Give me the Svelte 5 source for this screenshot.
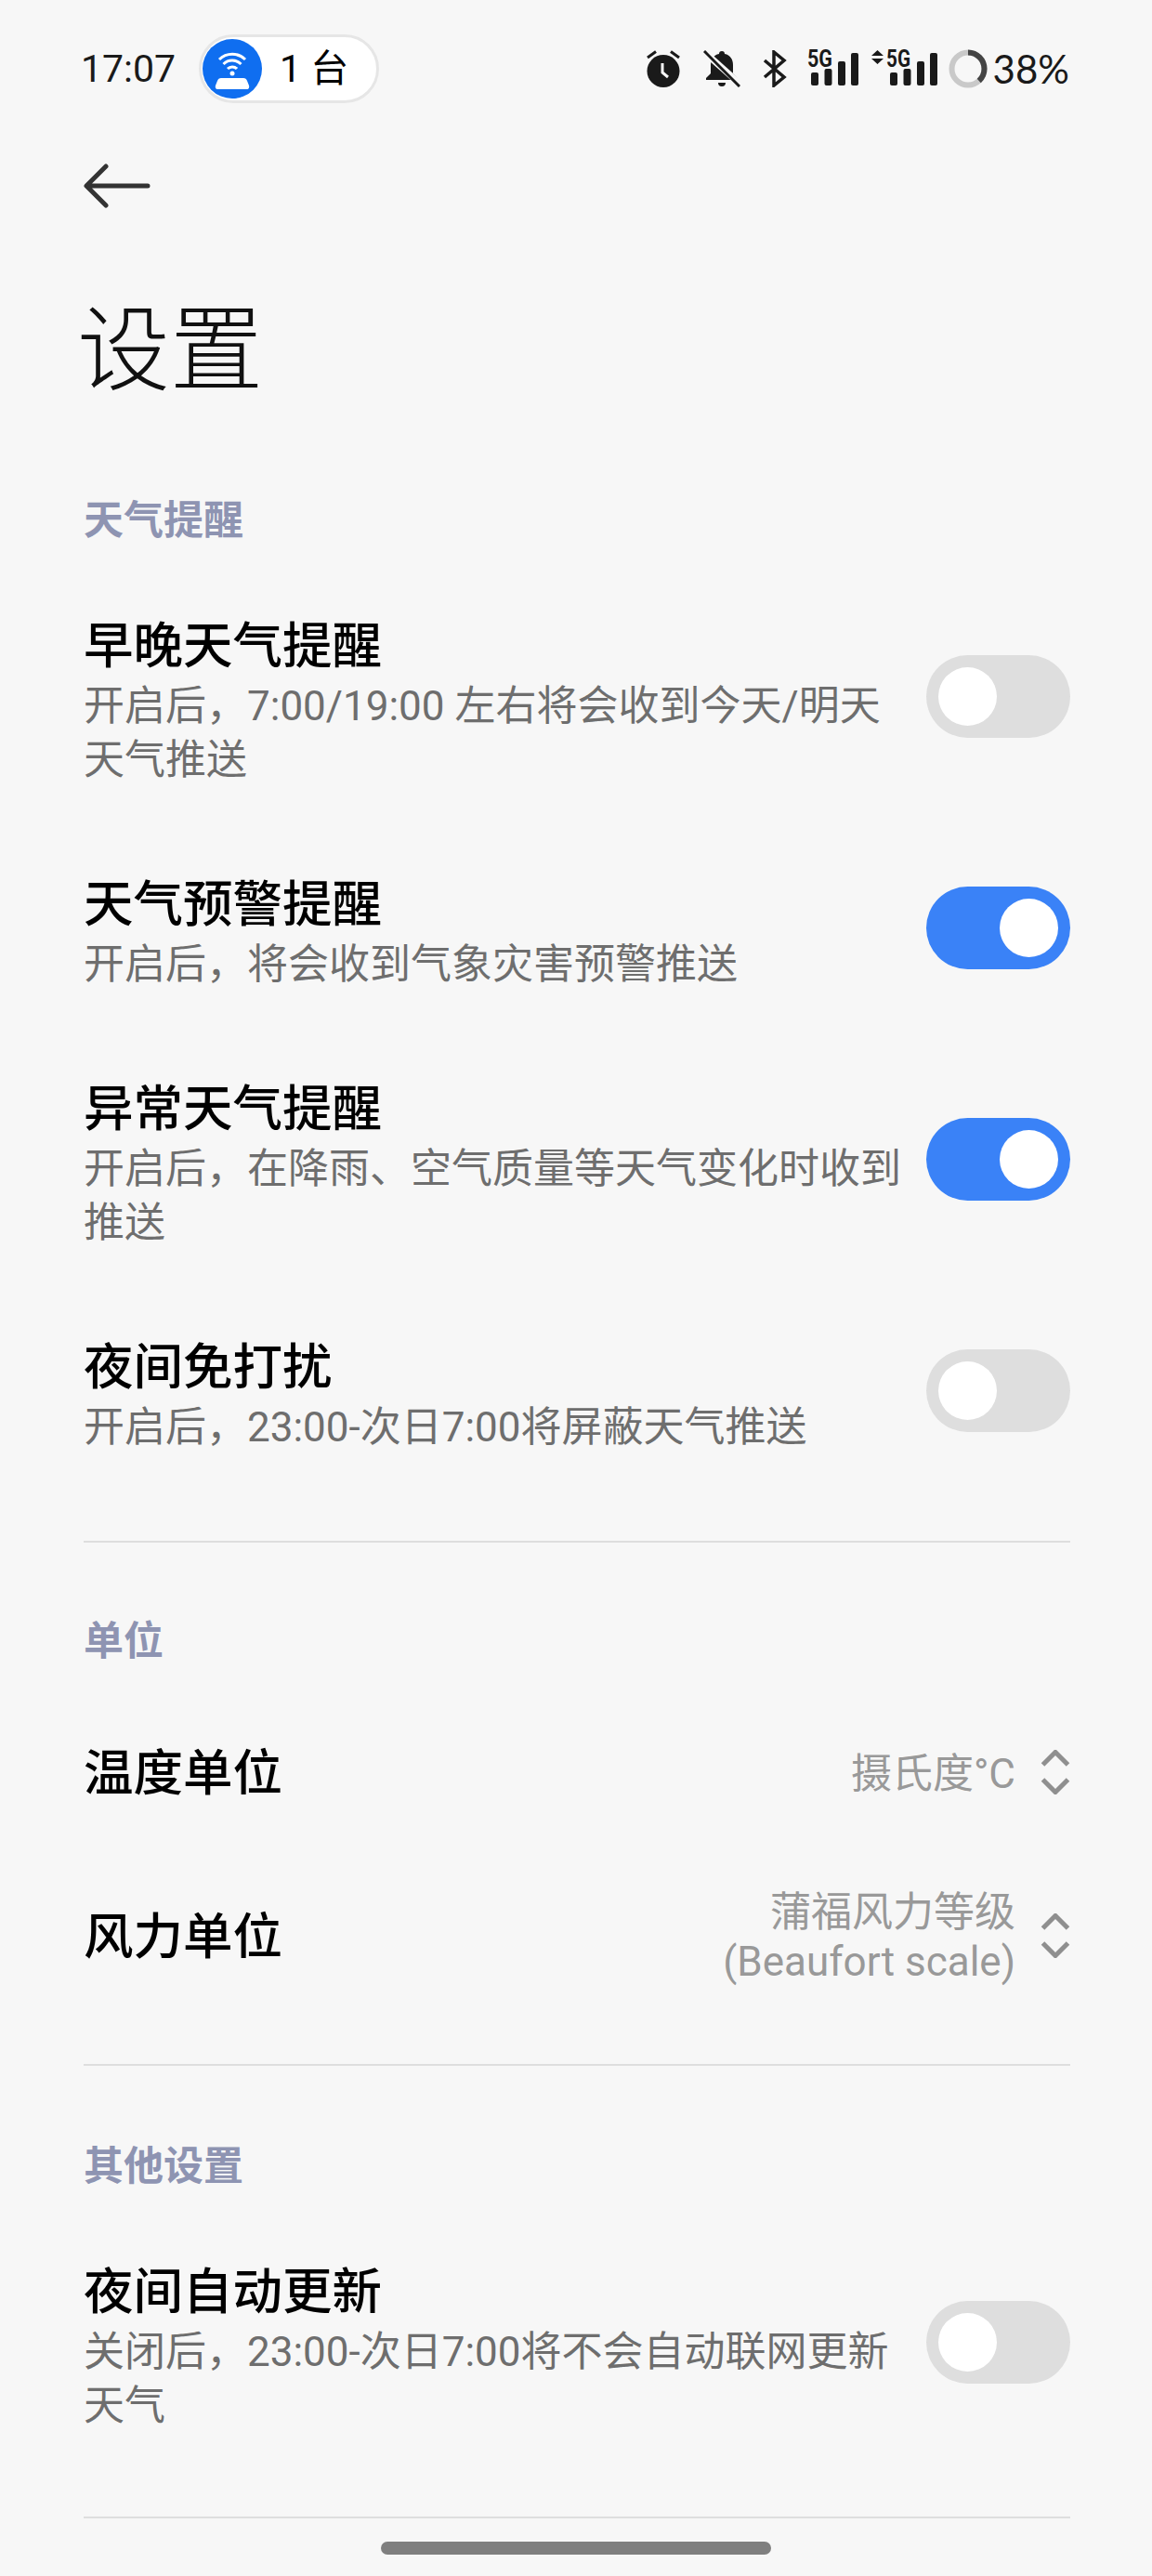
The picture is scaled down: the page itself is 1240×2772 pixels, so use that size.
<script>
  const group1 = [
    { title: '早晚天气提醒', desc: '开启后，7:00/19:00 左右将会收到今天/明天天气推送', on: false },
    { title: '天气预警提醒', desc: '开启后，将会收到气象灾害预警推送', on: true },
    { title: '异常天气提醒', desc: '开启后，在降雨、空气质量等天气变化时收到推送', on: true },
    { title: '夜间免打扰', desc: '开启后，23:00-次日7:00将屏蔽天气推送', on: false }
  ];
</script>

{#snippet toggle(on)}
  <div class="toggle" class:on><div class="knob"></div></div>
{/snippet}

{#snippet item(it)}
  <div class="item">
    <div class="text">
      <div class="title">{it.title}</div>
      <div class="desc">{it.desc}</div>
    </div>
    {@render toggle(it.on)}
  </div>
{/snippet}

{#snippet chev()}
  <svg class="chev" width="32" height="48" viewBox="0 0 32 48">
    <path d="M2.500 16 16 2.500 29.500 16M2.500 32 16 45.500 29.500 32" fill="none" stroke="#8f8f8f" stroke-width="5" />
  </svg>
{/snippet}

{#snippet bars(x)}
  <rect x={x} y="29" width="8" height="14" rx="2" />
  <rect x={x + 14.500} y="25" width="8" height="18" rx="2" />
  <rect x={x + 29} y="17" width="8" height="26" rx="2" />
  <rect x={x + 43} y="8" width="8" height="35" rx="2" />
{/snippet}

<div class="page">
  <div class="status">
    <div class="left">
      <span class="time">17:07</span>
      <div class="pill">
        <div class="dot">
          <svg width="64" height="64" viewBox="0 0 64 64">
            <path d="M18 22a20 20 0 0 1 28 0M22.500 27a13.500 13.500 0 0 1 19 0M27 32a7 7 0 0 1 10 0" fill="none" stroke="#fff" stroke-width="3" />
            <circle cx="32" cy="37" r="2.500" fill="#fff" />
            <path d="M20 42h24q3 0 4 3l2 5q1 4-3 4H17q-4 0-3-4l2-5q1-3 4-3z" fill="#fff" />
          </svg>
        </div>
        <span class="count">1 台</span>
      </div>
    </div>
    <div class="right">
      <svg width="38" height="40" viewBox="0 0 38 40">
        <circle cx="19" cy="22.500" r="17.500" fill="#1a1a1a" />
        <path d="M2 8 11 1.500M36 8 27 1.500" stroke="#1a1a1a" stroke-width="3" />
        <path d="M18 14v10l6 5" fill="none" stroke="#f7f7f7" stroke-width="3" />
      </svg>
      <svg class="bell" width="40" height="40" viewBox="0 0 40 40">
        <path d="M20 1a3 3 0 0 1 3 3c6 1 9 6 9 12v9l5 5v2H3v-2l5-5v-9c0-6 3-11 9-12a3 3 0 0 1 3-3zM16 35h8a4 4 0 0 1-8 0z" fill="#1a1a1a" />
        <path d="M-2 3 36 37" stroke="#f7f7f7" stroke-width="7" transform="translate(2 -2)" />
        <path d="M1 1 39 39" stroke="#1a1a1a" stroke-width="3" />
      </svg>
      <svg class="bt" width="26" height="40" viewBox="0 0 26 40">
        <path d="M2 11 23 29 12 38V2L23 11 2 29" fill="none" stroke="#1a1a1a" stroke-width="3.500" />
      </svg>
      <svg class="sig" width="55" height="50" viewBox="0 0 55 50" fill="#1a1a1a">
        <text x="0" y="23" class="fg" textLength="27" lengthAdjust="spacingAndGlyphs">5G</text>
        {@render bars(4)}
      </svg>
      <svg class="sig2" width="71" height="50" viewBox="0 0 71 50" fill="#1a1a1a">
        <path d="M0 11 6.500 5 13 11zM0 14h13l-6.500 6z" />
        <text x="16" y="23" class="fg" textLength="26" lengthAdjust="spacingAndGlyphs">5G</text>
        {@render bars(20)}
      </svg>
      <svg class="ring" width="42" height="42" viewBox="0 0 42 42">
        <circle cx="21" cy="21" r="17.500" fill="none" stroke="#c9c9c9" stroke-width="6" />
        <circle cx="21" cy="21" r="17.500" fill="none" stroke="#444" stroke-width="6" stroke-dasharray="41.800 110" transform="rotate(-90 21 21)" />
      </svg>
      <span class="batt">38%</span>
    </div>
  </div>

  <div class="nav">
    <svg width="72" height="52" viewBox="0 0 72 52">
      <path d="M69 26H4M24 5 3 26l21 21" fill="none" stroke="#333" stroke-width="5" stroke-linecap="round" stroke-linejoin="round" />
    </svg>
  </div>

  <h1>设置</h1>

  <section class="first">
    <div class="label">天气提醒</div>
    {#each group1 as it}
      {@render item(it)}
    {/each}
  </section>

  <section class="units">
    <div class="label">单位</div>
    <div class="row r1">
      <div class="title">温度单位</div>
      <div class="val">
        <span>摄氏度°C</span>
        {@render chev()}
      </div>
    </div>
    <div class="row r2">
      <div class="title">风力单位</div>
      <div class="val">
        <span>蒲福风力等级<br />(Beaufort scale)</span>
        {@render chev()}
      </div>
    </div>
  </section>

  <section class="other">
    <div class="label">其他设置</div>
    {@render item({ title: '夜间自动更新', desc: '关闭后，23:00-次日7:00将不会自动联网更新天气', on: false })}
  </section>

  <div class="home"></div>
</div>

<style>
  :global(body) {
    margin: 0;
    background: #f7f7f7;
  }
  .page {
    position: relative;
    box-sizing: border-box;
    height: 2772px;
    overflow: hidden;
    padding: 0 88px 0 90px;
    background: #f7f7f7;
    font-family: Roboto, "Noto Sans CJK SC", sans-serif;
    color: #000;
  }
  .status {
    display: flex;
    align-items: center;
    justify-content: space-between;
    height: 74px;
    padding-top: 37px;
    padding-right: 1px;
    margin-left: -3px;
  }
  .left {
    display: flex;
    align-items: center;
    gap: 27px;
  }
  .time {
    font-size: 41px;
    color: #1a1a1a;
    line-height: 50px;
    width: 100px;
  }
  .pill {
    box-sizing: border-box;
    width: 194px;
    height: 74px;
    border-radius: 37px;
    background: #fff;
    border: 3px solid #e6e6e6;
    display: flex;
    align-items: center;
    gap: 19px;
    padding-left: 1px;
  }
  .dot {
    width: 64px;
    height: 64px;
    border-radius: 50%;
    background: #0f6ef0;
  }
  .dot svg {
    display: block;
  }
  .count {
    font-size: 41px;
    line-height: 50px;
  }
  .right {
    display: flex;
    align-items: center;
  }
  .right svg {
    display: block;
  }
  .bell {
    margin-left: 24px;
  }
  .bt {
    margin-left: 24px;
  }
  .sig {
    margin-left: 22px;
  }
  .sig2 {
    margin-left: 14px;
  }
  .ring {
    margin-left: 12px;
  }
  .fg {
    font-family: Roboto, sans-serif;
    font-weight: 700;
    font-size: 25px;
  }
  .batt {
    font-family: Lato, Roboto, sans-serif;
    font-size: 42px;
    line-height: 50px;
    color: #1a1a1a;
    margin-left: 6px;
  }
  .nav {
    margin-top: 63px;
    height: 52px;
  }
  .nav svg {
    display: block;
  }
  h1 {
    margin: 87px 0 0 -7px;
    font-size: 100px;
    line-height: 130px;
    font-weight: 300;
    color: #111;
  }
  section {
    display: flex;
    flex-direction: column;
  }
  section.first {
    margin-top: 89px;
  }
  .label {
    font-size: 43px;
    line-height: 56px;
    font-weight: 700;
    color: #8e94b2;
    margin-bottom: 22px;
  }
  .item {
    display: flex;
    align-items: center;
    gap: 27px;
    padding: 41.500px 0;
  }
  .text {
    flex: 1;
    min-width: 0;
    padding-top: 12px;
  }
  .title {
    font-size: 53.500px;
    line-height: 64px;
    font-weight: 500;
  }
  .desc {
    margin-top: 3px;
    font-size: 44px;
    line-height: 58px;
    color: #6e6e6e;
  }
  .toggle {
    flex: none;
    width: 155px;
    height: 89px;
    border-radius: 45px;
    background: #dedede;
    position: relative;
  }
  .toggle.on {
    background: #3a82f7;
  }
  .knob {
    position: absolute;
    top: 13px;
    left: 13px;
    width: 63px;
    height: 63px;
    border-radius: 50%;
    background: #fff;
  }
  .toggle.on .knob {
    left: 79px;
  }
  .first {
    border-bottom: 2px solid #dedede;
    padding-bottom: 52px;
  }
  .units {
    padding-top: 78px;
    padding-bottom: 83px;
    border-bottom: 2px solid #dedede;
  }
  .row {
    display: flex;
    align-items: center;
    justify-content: space-between;
  }
  .r1 {
    margin-top: 61px;
  }
  .r2 {
    margin-top: 91px;
  }
  .val {
    display: flex;
    align-items: center;
    gap: 27px;
    text-align: right;
    font-size: 44px;
    line-height: 53px;
    color: #999;
  }
  .chev {
    display: block;
    flex: none;
    margin-bottom: 4px;
  }
  .other {
    padding-top: 80px;
    padding-bottom: 49px;
    border-bottom: 2px solid #dedede;
  }
  .home {
    position: absolute;
    left: 410px;
    top: 2735px;
    width: 420px;
    height: 14px;
    border-radius: 7px;
    background: #7f7f7f;
  }
</style>
